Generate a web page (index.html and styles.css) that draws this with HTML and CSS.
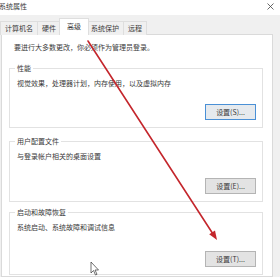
FILE: index.html
```html
<!DOCTYPE html>
<html lang="zh-CN">
<head>
<meta charset="utf-8">
<title>系统属性</title>
<link rel="stylesheet" href="styles.css">
</head>
<body>
<div class="window">
  <div class="titlebar">
    <span class="title">系统属性</span>
    <svg class="close" viewBox="0 0 7 7" width="7" height="7"><path d="M0.5 0.5 L6.5 6.5 M6.5 0.5 L0.5 6.5" stroke="#444" stroke-width="0.8" fill="none"/></svg>
  </div>
  <div class="body">
    <div class="tabs">
      <div class="tab">计算机名</div>
      <div class="tab">硬件</div>
      <div class="tab active">高级</div>
      <div class="tab">系统保护</div>
      <div class="tab">远程</div>
    </div>
    <div class="panel">
      <p class="note">要进行大多数更改，你必须作为管理员登录。</p>
      <div class="group g1">
        <div class="legend">性能</div>
        <p class="desc">视觉效果，处理器计划，内存使用，以及虚拟内存</p>
        <div class="actions"><button class="btn default">设置(S)...</button></div>
      </div>
      <div class="group g2">
        <div class="legend">用户配置文件</div>
        <p class="desc">与登录帐户相关的桌面设置</p>
        <div class="actions"><button class="btn">设置(E)...</button></div>
      </div>
      <div class="group g3">
        <div class="legend">启动和故障恢复</div>
        <p class="desc">系统启动、系统故障和调试信息</p>
        <div class="actions"><button class="btn">设置(T)...</button></div>
      </div>
    </div>
  </div>
  <svg class="overlay" viewBox="0 0 280 277" width="280" height="277">
    <line x1="88" y1="41" x2="213" y2="234" stroke="#c4262c" stroke-width="1.6" stroke-linecap="round"/>
    <polygon points="217,240 209.2,234.3 215,230.6" fill="#c4262c"/>
    <polygon class="cursor" points="91,262 91,273 93.5,270.5 95.5,275 97,274.3 95,270 98.5,270" fill="#fff" stroke="#333" stroke-width="0.7" stroke-linejoin="round"/>
  </svg>
</div>
</body>
</html>
```

FILE: styles.css
```css
* { box-sizing: border-box; }
html, body {
  margin: 0;
  padding: 0;
  width: 280px;
  height: 277px;
  overflow: hidden;
  background: #f0f0f0;
}
body {
  font-family: "Noto Sans CJK SC", "Noto Sans", sans-serif;
  font-size: 7px;
  line-height: 9px;
  color: #3a3a3a;
}
.window {
  position: relative;
  width: 280px;
  height: 277px;
  display: flex;
  flex-direction: column;
}
.titlebar {
  height: 15px;
  background: #ffffff;
  display: flex;
  align-items: flex-start;
  justify-content: space-between;
  padding: 2px 6px 0 0;
  flex: none;
}
.title {
  margin-left: -1px;
  color: #3a3a3a;
}
.close {
  margin-top: 1px;
}
.body {
  flex: 1;
  display: flex;
  flex-direction: column;
  background: #f0f0f0;
  padding-right: 7px;
}
.tabs {
  height: 20px;
  display: flex;
  align-items: flex-end;
  padding-left: 0;
  flex: none;
  position: relative;
  z-index: 2;
  margin-bottom: -1px;
}
.tab {
  height: 14px;
  padding: 2px 4px 0;
  border: 1px solid #dedede;
  border-bottom: none;
  background: #f0f0f0;
  margin-left: -1px;
  white-space: nowrap;
  color: #3a3a3a;
}
.tab:first-child { margin-left: 0; }
.tab.active {
  height: 17px;
  background: #ffffff;
  padding: 3px 7px 0;
  margin-left: -2px;
  margin-right: -2px;
  position: relative;
  z-index: 3;
}
.panel {
  flex: 1;
  background: #ffffff;
  border: 1px solid #dadada;
  margin-left: 1px;
  padding: 8px 9px 0 7px;
  position: relative;
  z-index: 1;
}
.note {
  margin: 0 0 16px 5px;
}
.group {
  border: 1px solid #e2e2e2;
  display: flex;
  flex-direction: column;
  padding: 0 6px 7px 7px;
}
.g1 { height: 60px; }
.g2 { height: 61px; margin-top: 13px; }
.g3 { height: 63px; margin-top: 10px; }
.legend {
  margin: -5px 0 0 -2px;
  padding: 0 2px;
  background: #ffffff;
  align-self: flex-start;
  color: #3a3a3a;
}
.desc {
  margin: 6px 0 0 0;
}
.actions {
  margin-top: auto;
  display: flex;
  justify-content: flex-end;
}
.btn {
  width: 51px;
  height: 16px;
  font-family: inherit;
  font-size: 7px;
  line-height: 9px;
  color: #3a3a3a;
  background: #e3e3e3;
  border: 1px solid #b4b4b4;
  padding: 0;
  margin: 0;
}
.btn.default {
  border-color: #4a90d6;
  background: #e6eaee;
}
.overlay {
  position: absolute;
  left: 0;
  top: 0;
  z-index: 10;
  pointer-events: none;
}
```
